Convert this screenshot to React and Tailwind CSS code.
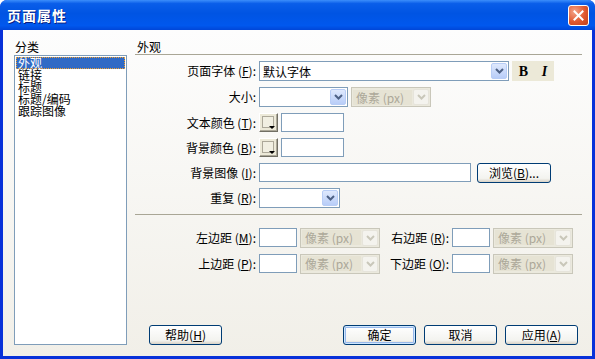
import React from 'react';

const Key = ({ c }) => (
  <span>
    (<u>{c}</u>)
  </span>
);

function Arrow({ disabled }) {
  return (
    <div
      className={`w-[16px] h-[16px] m-[1px] shrink-0 flex items-center justify-center rounded-[2px] border ${
        disabled
          ? 'border-[#e6e4db] bg-[#f4f3ee]'
          : 'border-[#b8cdf6] bg-[linear-gradient(to_bottom,#dfe9fd,#b8cdf8)]'
      }`}
    >
      <svg width="9" height="6" viewBox="0 0 9 6">
        <path
          d="M1 1 L4.5 4.5 L8 1"
          fill="none"
          stroke={disabled ? '#c9c7ba' : '#4d6185'}
          strokeWidth="2"
        />
      </svg>
    </div>
  );
}

function Select({ w, h = 'h-[20px]', value, disabled }) {
  return (
    <div
      className={`${w} ${h} flex items-center border shrink-0 ${
        disabled ? 'border-[#c9c7ba] bg-[#ebe9dd]' : 'border-[#7f9db9] bg-white'
      }`}
    >
      <div
        className={`flex-1 pl-[3px] whitespace-nowrap overflow-hidden leading-[15px] ${
          disabled ? 'text-[#aca899] bg-[#e6e3d4] h-[15px] ml-[1px]' : ''
        }`}
      >
        {value}
      </div>
      <Arrow disabled={disabled} />
    </div>
  );
}

function Input({ w }) {
  return <div className={`${w} h-[19px] border border-[#7f9db9] bg-white shrink-0`} />;
}

function Swatch() {
  return (
    <div className="w-[19px] h-[19px] shrink-0 relative bg-[#ece9d8] border border-[#fff] border-r-[#716f64] border-b-[#716f64] shadow-[inset_-1px_-1px_0_#aca899]">
      <div className="absolute left-[2px] top-[2px] w-[12px] h-[12px] border border-[#aca899] bg-[#f1efe2]" />
      <div className="absolute right-[2px] bottom-[2px] w-0 h-0 border-l-[3px] border-r-[3px] border-t-[3px] border-l-transparent border-r-transparent border-t-black" />
    </div>
  );
}

function Btn({ children, w = 'w-[73px]', def }) {
  return (
    <div
      className={`${w} h-[20px] shrink-0 flex items-center justify-center rounded-[3px] border border-[#003c74] bg-[linear-gradient(to_bottom,#ffffff,#f3f3ef_80%,#d8d2c6)] text-black whitespace-nowrap ${
        def ? 'shadow-[inset_0_0_0_1px_#cee7ff,inset_0_0_0_2px_#98b8ea]' : ''
      }`}
    >
      {children}
    </div>
  );
}

function Label({ w = 'w-[124px]', children }) {
  return <div className={`${w} shrink-0 text-right pr-[3px] whitespace-nowrap`}>{children}</div>;
}

export default function App() {
  const cats = ['外观', '链接', '标题', '标题/编码', '跟踪图像'];
  return (
    <div className="w-[595px] h-[359px] flex flex-col bg-[#0831d9] rounded-t-[7px] overflow-hidden text-[12px] text-black font-['Noto_Sans_CJK_SC','Noto_Sans',sans-serif]">
      <div className="h-[30px] shrink-0 flex items-center justify-between pl-[7px] pr-[6px] bg-[linear-gradient(to_bottom,#3c8efb_0%,#0a5ee9_12%,#0054e3_45%,#0058ee_85%,#0046d8_100%)]">
        <div className="text-white font-bold text-[14px] tracking-[1px] [text-shadow:1px_1px_0_#0a1f80]">页面属性</div>
        <div className="w-[21px] h-[21px] rounded-[3px] border border-white flex items-center justify-center bg-[radial-gradient(circle_at_30%_30%,#f4a48a,#e0582f_55%,#c0401c)]">
          <svg width="11" height="11" viewBox="0 0 11 11">
            <path d="M1.5 1.5 L9.5 9.5 M9.5 1.5 L1.5 9.5" stroke="white" strokeWidth="2" strokeLinecap="square" />
          </svg>
        </div>
      </div>

      <div className="flex-1 mx-[3px] mb-[3px] flex pt-[9px] pl-[11px] pr-[10px] pb-[11px] bg-[linear-gradient(to_bottom,#fdfdfd,#f1efe8)]">
        <div className="w-[113px] flex flex-col shrink-0">
          <div className="h-[16px] leading-[16px] pl-[1px]">分类</div>
          <div className="flex-1 border border-[#7f9db9] bg-white p-[1px]">
            {cats.map((c, i) => (
              <div
                key={c}
                className={`h-[12px] leading-[12px] pl-[2px] whitespace-nowrap ${
                  i === 0 ? 'bg-[#316ac5] text-white outline-1 outline-dotted outline-[#f0a030] -outline-offset-1' : ''
                }`}
              >
                {c}
              </div>
            ))}
          </div>
        </div>

        <div className="flex-1 ml-[8px] flex flex-col">
          <div className="h-[16px] leading-[16px] pl-[2px] border-b border-[#a9a696]">外观</div>

          <div className="mt-[6px] flex items-center h-[20px]">
            <Label>
              页面字体 <Key c="F" />:
            </Label>
            <Select w="w-[250px]" value="默认字体" />
            <div className="ml-[3px] w-[42px] h-[20px] bg-[#ece9d8] flex items-center justify-around font-['Liberation_Serif',serif] text-[14px] font-bold">
              <span>B</span>
              <span className="italic">I</span>
            </div>
          </div>

          <div className="mt-[6px] flex items-center h-[20px]">
            <Label>大小:</Label>
            <Select w="w-[89px]" value="" />
            <div className="ml-[3px]">
              <Select w="w-[80px]" value="像素 (px)" disabled />
            </div>
          </div>

          <div className="mt-[6px] flex items-center h-[19px]">
            <Label>
              文本颜色 <Key c="T" />:
            </Label>
            <Swatch />
            <div className="ml-[3px]">
              <Input w="w-[63px]" />
            </div>
          </div>

          <div className="mt-[6px] flex items-center h-[19px]">
            <Label>
              背景颜色 <Key c="B" />:
            </Label>
            <Swatch />
            <div className="ml-[3px]">
              <Input w="w-[63px]" />
            </div>
          </div>

          <div className="mt-[6px] flex items-center h-[19px]">
            <Label>
              背景图像 <Key c="I" />:
            </Label>
            <Input w="w-[212px]" />
            <div className="ml-[6px]">
              <Btn w="w-[74px]">
                浏览 <Key c="B" />...
              </Btn>
            </div>
          </div>

          <div className="mt-[6px] flex items-center h-[20px]">
            <Label>
              重复 <Key c="R" />:
            </Label>
            <Select w="w-[81px]" value="" />
          </div>

          <div className="mt-[6px] h-px bg-[#a9a696]" />

          <div className="mt-[13px] flex items-center h-[19px]">
            <Label>
              左边距 <Key c="M" />:
            </Label>
            <Input w="w-[38px]" />
            <div className="ml-[3px]">
              <Select w="w-[80px]" value="像素 (px)" disabled />
            </div>
            <Label w="w-[72px]">
              右边距 <Key c="R" />:
            </Label>
            <Input w="w-[38px]" />
            <div className="ml-[3px]">
              <Select w="w-[80px]" value="像素 (px)" disabled />
            </div>
          </div>

          <div className="mt-[7px] flex items-center h-[19px]">
            <Label>
              上边距 <Key c="P" />:
            </Label>
            <Input w="w-[38px]" />
            <div className="ml-[3px]">
              <Select w="w-[80px]" value="像素 (px)" disabled />
            </div>
            <Label w="w-[72px]">
              下边距 <Key c="O" />:
            </Label>
            <Input w="w-[38px]" />
            <div className="ml-[3px]">
              <Select w="w-[80px]" value="像素 (px)" disabled />
            </div>
          </div>

          <div className="mt-auto flex items-center pl-[14px] pr-[4px]">
            <Btn>
              帮助 <Key c="H" />
            </Btn>
            <div className="flex-1" />
            <div className="flex gap-[8px]">
              <Btn def>确定</Btn>
              <Btn>取消</Btn>
              <Btn>
                应用 <Key c="A" />
              </Btn>
            </div>
          </div>
        </div>
      </div>
    </div>
  );
}
